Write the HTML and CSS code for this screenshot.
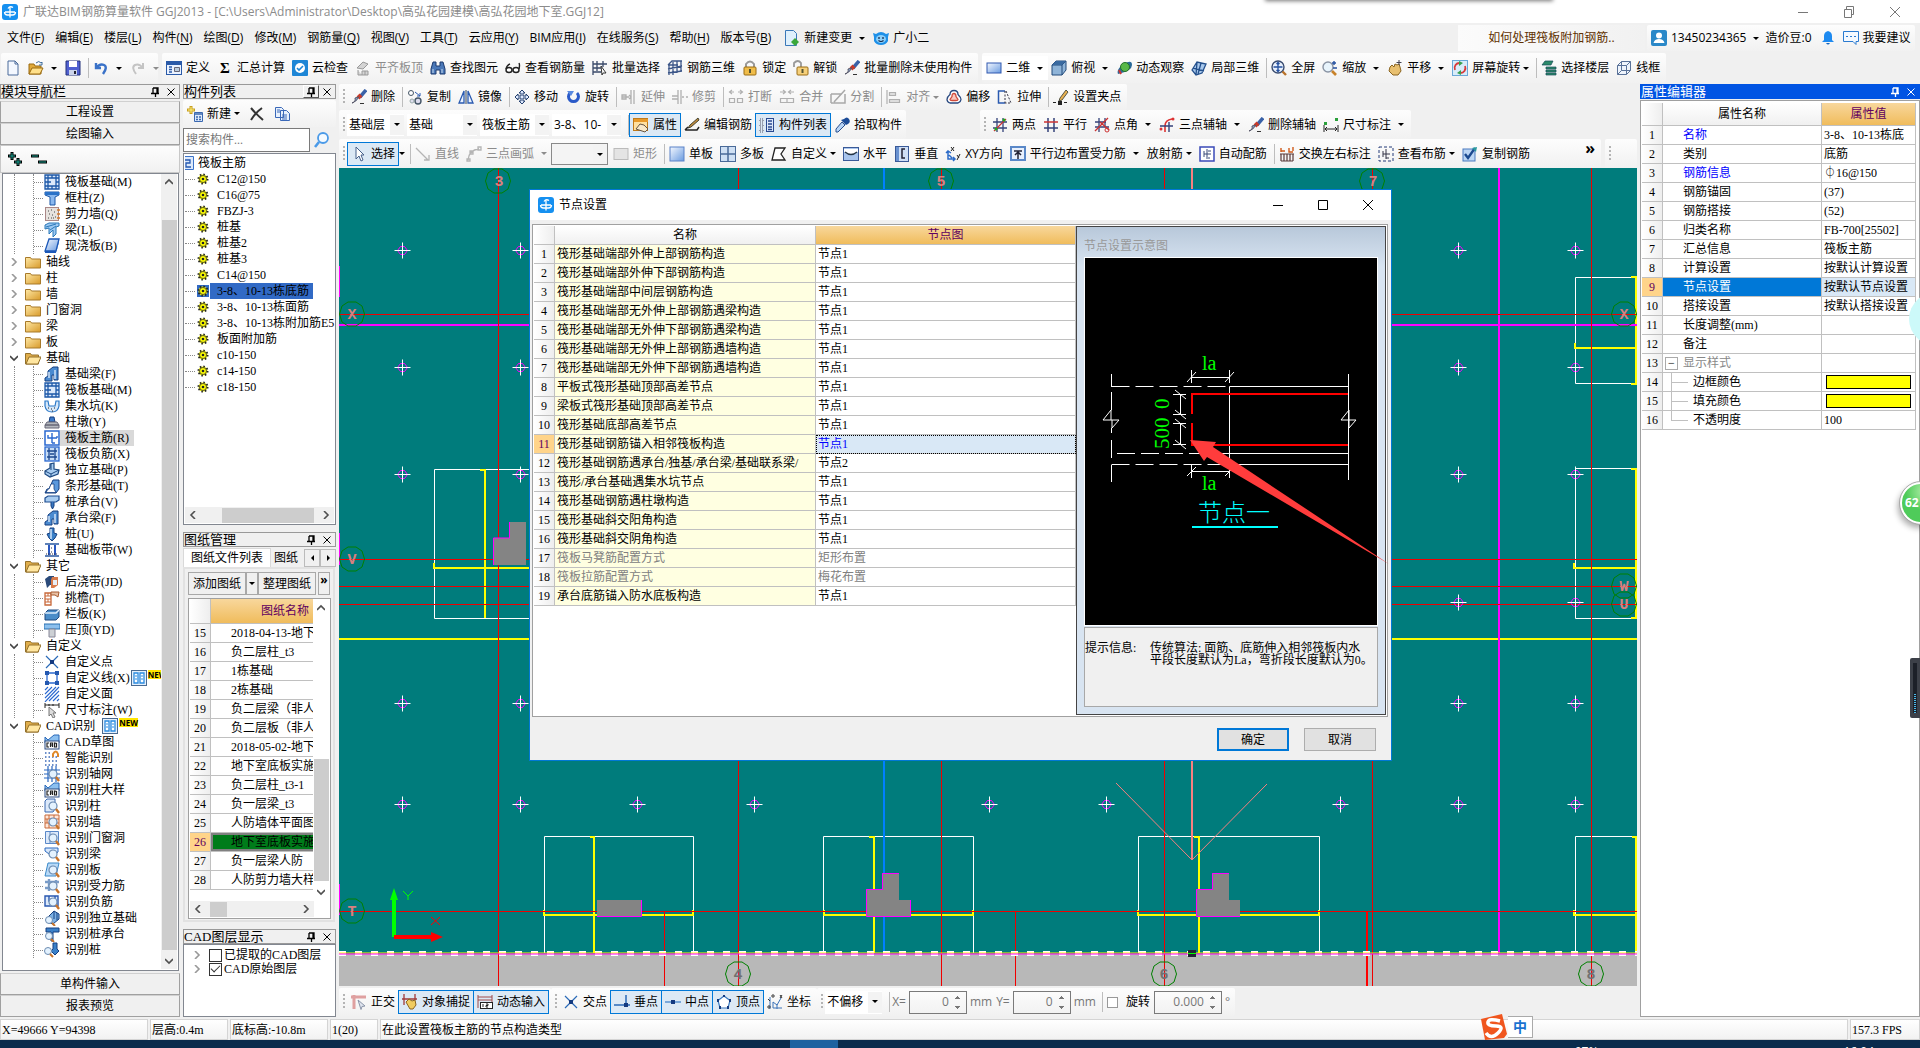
FILE: index.html
```html
<!DOCTYPE html>
<html lang="zh-CN">
<head>
<meta charset="utf-8">
<title>广联达BIM钢筋算量软件 GGJ2013</title>
<link rel="stylesheet" href="styles.css">
</head>
<body>
<svg class="defs" aria-hidden="true">
<defs>
<linearGradient id="gb" x2="1" y2="1"><stop offset="0" stop-color="#f4f8ff"/><stop offset="1" stop-color="#6a9be0"/></linearGradient>
<linearGradient id="gf" x2="1" y2="1"><stop offset="0" stop-color="#ffe9a6"/><stop offset="1" stop-color="#d89a2a"/></linearGradient>
</defs>
<symbol id="logo" viewBox="0 0 16 16"><rect width="16" height="16" rx="3" fill="#1590f0"/><path d="M8 2.500v11M11 3.500q-3-2-5 1M2.500 8q0 3 3 3M13.500 8q0 3-3 3h-5M3 8h10" fill="none" stroke="#fff" stroke-width="1.300"/></symbol>
<symbol id="new" viewBox="0 0 16 16"><path d="M3 1h7l3 3v11H3z" fill="#f4f8ff" stroke="#4a6a9a"/><path d="M10 1v3h3" fill="none" stroke="#4a6a9a"/></symbol>
<symbol id="open" viewBox="0 0 16 16"><path d="M1 4h5l1 2h6v8H1z" fill="#e0a93a" stroke="#9a6a10"/><path d="M1 14l3-6h11l-3 6z" fill="#ffe08a" stroke="#9a6a10"/><path d="M8 3q3-3 5 0l1-1v3h-3" fill="none" stroke="#3b6a9b"/></symbol>
<symbol id="save" viewBox="0 0 16 16"><path d="M1 1h14v14H1z" fill="#5060d0" stroke="#22307a"/><path d="M4 1h8v6H4z" fill="#fff"/><path d="M4 10h8v5H4z" fill="#ccd4ea"/><path d="M9 11h2v3H9z" fill="#223"/></symbol>
<symbol id="undo" viewBox="0 0 16 16"><path d="M3 3v5h5M3 8q4-5 8-3t-1 9" fill="none" stroke="#3a72c8" stroke-width="2.400"/></symbol>
<symbol id="redo" viewBox="0 0 16 16"><path d="M13 3v5H8M13 8Q9 3 5 5t1 9" fill="none" stroke="#c4c4c4" stroke-width="2"/></symbol>
<symbol id="define" viewBox="0 0 16 16"><rect x=".5" y="1.500" width="15" height="13" fill="#eaf2ff" stroke="#2a5aa8"/><path d="M1 2h14v3H1z" fill="#2a5aa8"/><path d="M3 7h3M3 9.500h3M3 12h3" stroke="#2a5aa8" stroke-width="1.500"/><path d="M8.500 7.500h5v4h-5z" fill="#bcd" stroke="#667"/></symbol>
<symbol id="cloud" viewBox="0 0 16 16"><rect width="16" height="16" rx="1" fill="#1e86d6"/><circle cx="8" cy="8" r="5" fill="#fff"/><path d="M5 8l2 2 4-4" fill="none" stroke="#1e86d6" stroke-width="1.600"/></symbol>
<symbol id="top0" viewBox="0 0 16 16"><path d="M2 8l6-6 5 2-5 5zM3 10v5h10v-4H7v4M10 11v4" fill="#d4d4d4" stroke="#999"/></symbol>
<symbol id="bino" viewBox="0 0 16 16"><path d="M3 2h3v4h4V2h3l2 7v5h-5v-4H6v4H1V9z" fill="#4a78b8" stroke="#1c3a6e"/><path d="M3 9v4M12 9v4" stroke="#cde"/></symbol>
<symbol id="glass" viewBox="0 0 16 16"><g fill="#fff" stroke="#222" stroke-width="1.400"><ellipse cx="4" cy="10" rx="3" ry="2.500"/><ellipse cx="11" cy="10" rx="3" ry="2.500"/><path d="M1 9q1-4 4-5M14 9q1-4 0-6" fill="none"/></g></symbol>
<symbol id="batch" viewBox="0 0 16 16"><path d="M1 1v14M5 1v10M1 4h14M1 8h8M1 12h8M11 1v6" fill="none" stroke="#3a4a6a" stroke-width="1.300"/><path d="M9 6l5 7h-3l-1 2z" fill="#fff" stroke="#333"/></symbol>
<symbol id="g3d" viewBox="0 0 16 16"><path d="M1 5l4-4h10M1 9l14-3M1 13l14-2M2 5v10M6 2v13M10 1v12M14 1v11M1 5h10" fill="none" stroke="#3c5688" stroke-width="1.300"/></symbol>
<symbol id="lock" viewBox="0 0 16 16"><path d="M4 8V4q4-5 8 0v4" fill="none" stroke="#999" stroke-width="2"/><rect x="2" y="7" width="12" height="8" rx="1" fill="#f0bd4a" stroke="#9a6d14"/><path d="M8 9v4" stroke="#553" stroke-width="2"/></symbol>
<symbol id="unlock" viewBox="0 0 16 16"><path d="M1 7V3q4-4 7 0v5" fill="none" stroke="#999" stroke-width="1.800"/><rect x="4" y="7" width="11" height="8" rx="1" fill="#f6d07a" stroke="#9a6d14"/><path d="M9.500 9v4" stroke="#553" stroke-width="2"/></symbol>
<symbol id="brush" viewBox="0 0 16 16"><path d="M15 1L9 8" stroke="#3a62a8" stroke-width="3.500"/><path d="M10 6L7 9" stroke="#c83a2a" stroke-width="4"/><path d="M8 8q-3 5-7 6 4-1 3-5z" fill="#8aa8d0" stroke="#556"/><path d="M9 14.500h4" stroke="#333"/></symbol>
<symbol id="r2d" viewBox="0 0 16 16"><rect x="1" y="3" width="14" height="10" fill="url(#gb)" stroke="#3058b0"/></symbol>
<symbol id="cube" viewBox="0 0 16 16"><path d="M1 5l4-4h10v9l-4 5H1z" fill="#8fb4d8" stroke="#234a7a"/><path d="M1 5h10v10M11 5l4-4" fill="none" stroke="#234a7a"/><path d="M1 5l4-4h10l-4 4z" fill="#3a6aa0"/></symbol>
<symbol id="orbit" viewBox="0 0 16 16"><path d="M2 14Q0 9 8 4t8 1q0 6-14 9z" fill="#2a6a9a"/><circle cx="9" cy="7" r="4.500" fill="#58b848" stroke="#24702a"/><path d="M3 10l2 4" stroke="#c33" stroke-width="2"/></symbol>
<symbol id="p3d" viewBox="0 0 16 16"><path d="M1 10l5-8 9 2-4 9-6 2zM6 2l-1 13M10 3l-3 11M2 8l11 3" fill="#a8c8ec" stroke="#24508c" stroke-width="1.300"/></symbol>
<symbol id="zfit" viewBox="0 0 16 16"><circle cx="7" cy="7" r="6" fill="#e8f0fc" stroke="#3a4c70" stroke-width="1.400"/><path d="M7 2.500v9M2.500 7h9M5.500 4L7 2.500 8.500 4M5.500 10L7 11.500 8.500 10" fill="none" stroke="#2450a0" stroke-width="1.300"/><path d="M11.500 11.500l3.500 3.500" stroke="#b8722a" stroke-width="2.400"/></symbol>
<symbol id="zoom" viewBox="0 0 16 16"><circle cx="6" cy="7" r="5" fill="#e8f4fc" stroke="#8a94a4" stroke-width="1.400"/><path d="M10 11l4 4" stroke="#c8822a" stroke-width="2.600"/><path d="M12 1v4M10 3h4M11 8h4" stroke="#2450a0" stroke-width="1.400"/></symbol>
<symbol id="hand" viewBox="0 0 16 16"><path d="M3 7l2-2 2 2 1-3 2 1 2-1 1 3 1 4-3 4H6L2 11z" fill="#e8c070" stroke="#8a6420"/><path d="M12 0v5M9.500 2.500h5" stroke="#445"/></symbol>
<symbol id="rots" viewBox="0 0 16 16"><rect x=".5" y=".5" width="15" height="15" fill="#d8ecfa" stroke="#6aa8d8"/><path d="M3 10a5 5 0 0 1 5-7M13 6a5 5 0 0 1-5 7" fill="none" stroke="#d83a3a" stroke-width="1.800"/><path d="M7 1l4 2-4 3zM9 10l-4 3 4 2z" fill="#3aa050"/></symbol>
<symbol id="floors" viewBox="0 0 16 16"><path d="M1 5l3-4h8l-2 4zM5 7h10v2H5zM5 10h10v2H5zM5 13h10v2H5z" fill="#2c8a6a" stroke="#184a5a" stroke-width=".7"/></symbol>
<symbol id="wire" viewBox="0 0 16 16"><path d="M1.500 5.500h9v9h-9zM1.500 5.500l4-4h9v9l-4 4M10.500 5.500l4-4M5.500 1.500v9h9M5.500 10.500l-4 4" fill="#eef4fc" stroke="#5a7298"/></symbol>
<symbol id="copy" viewBox="0 0 16 16"><circle cx="4" cy="4" r="2.500" fill="#fff" stroke="#456"/><circle cx="11" cy="12" r="3" fill="#dde" stroke="#456" stroke-width="1.400"/><circle cx="5" cy="12" r="2" fill="#dde" stroke="#9aa"/><path d="M8 3l5 4M13 4v3h-3" fill="none" stroke="#2a5ab0"/></symbol>
<symbol id="mirror" viewBox="0 0 16 16"><path d="M6 2v12H1zM10 2v12h5z" fill="#eaf2ff" stroke="#2a5ab0" stroke-width="1.300"/><path d="M8 1v14" stroke="#345"/></symbol>
<symbol id="move" viewBox="0 0 16 16"><path d="M8 1l3 3H9v3h3V5l3 3-3 3V9H9v3h2l-3 3-3-3h2V9H4v2L1 8l3-3v2h3V4H5z" fill="#dfeaff" stroke="#24406e"/></symbol>
<symbol id="rotate" viewBox="0 0 16 16"><path d="M5 4a5 5 0 1 0 7 0" fill="none" stroke="#2a5ac8" stroke-width="3"/><path d="M2 2h7L6 7z" fill="#5a8ae0"/></symbol>
<symbol id="gext" viewBox="0 0 16 16"><path d="M1 8h7M1 6h4v4H1zM10 1v14M13 1v14M8 6l2 2-2 2" fill="none" stroke="#b0b0b0" stroke-width="1.300"/></symbol>
<symbol id="gtrim" viewBox="0 0 16 16"><path d="M6 1v14M9 1v14M0 7h6M0 10h6M10 8h2M14 8h2" fill="none" stroke="#b0b0b0" stroke-width="1.300"/></symbol>
<symbol id="gbrk" viewBox="0 0 16 16"><path d="M1 3h5M10 3h5M4 1L1.500 3 4 5M12 1l2.500 2L12 5M1.500 9.500h5v4h-5zM9.500 9.500h5v4h-5z" fill="none" stroke="#b0b0b0" stroke-width="1.200"/></symbol>
<symbol id="gmrg" viewBox="0 0 16 16"><path d="M1 3h5M10 3h5M4 1L6.500 3 4 5M12 1L9.500 3 12 5M1.500 9.500h13v4h-13zM8 9v5" fill="none" stroke="#b0b0b0" stroke-width="1.200"/></symbol>
<symbol id="gsplit" viewBox="0 0 16 16"><path d="M1 5h11M1 14h14V5M1 5v9M15 1L4 13" fill="none" stroke="#a8a8a8" stroke-width="1.500"/></symbol>
<symbol id="galign" viewBox="0 0 16 16"><path d="M1 1v14M3.500 3.500h6v3h-6zM3.500 10.500h10v3h-10z" fill="#ddd" stroke="#b0b0b0" stroke-width="1.200"/></symbol>
<symbol id="offset" viewBox="0 0 16 16"><path d="M8 1.500q4 0 4 4 3 3 3 5t-3 3.500H4q-3-1-3-3.500t3-5q0-4 4-4z" fill="#fff" stroke="#2a4a80" stroke-width="1.300"/><path d="M8 4.500q2 0 2 3l2 3q0 1-2 1H6q-2 0-2-1l2-3q0-3 2-3z" fill="#f8c8c0" stroke="#d04a3a" stroke-width="1.300"/></symbol>
<symbol id="stretch" viewBox="0 0 16 16"><path d="M8 2H1.500v12H8" fill="none" stroke="#2a5ab0" stroke-width="1.500"/><path d="M8 2v12M9 2l5 12H8" fill="none" stroke="#334" stroke-dasharray="2 1.500"/></symbol>
<symbol id="pen" viewBox="0 0 16 16"><path d="M13 1l2 2-6 8-3 1 1-3z" fill="#e8b050" stroke="#554"/><path d="M0 13.500h3M11 13.500h3" stroke="#222"/><path d="M5 12h4v4H5z" fill="#222"/></symbol>
<symbol id="prop" viewBox="0 0 16 16"><rect x=".5" y="1.500" width="14" height="12" fill="#ffe0a0" stroke="#c07a1a"/><path d="M1 2h14v3H1z" fill="#e89a2a"/><path d="M3 12l4-5 4 1 4 4-3 3z" fill="#f8e8c8" stroke="#654"/></symbol>
<symbol id="ebar" viewBox="0 0 16 16"><path d="M14 1l1 2-8 7-3 1 2-3z" fill="#c08a3a" stroke="#443"/><path d="M1 13h12l2-3M1 13l3-3" fill="none" stroke="#222" stroke-width="1.500"/></symbol>
<symbol id="clist" viewBox="0 0 16 16"><path d="M1 2h3v3H1zM1 7h3v3H1zM1 12h3v3H1z" fill="none" stroke="#556" stroke-dasharray="1 1"/><rect x="7.500" y="1.500" width="7" height="13" fill="#dde8fa" stroke="#2a4a90"/><path d="M9 4h4M9 7h4M9 10h4M9 12.500h4" stroke="#2a4a90" stroke-width="1.300"/></symbol>
<symbol id="picker" viewBox="0 0 16 16"><path d="M10 2q3-3 5 0t-1 5l-2 1-5-5z" fill="#1c4c98"/><path d="M8 5l3 3-7 7H2v-3z" fill="#b8d4f4" stroke="#2a5090"/></symbol>
<symbol id="twopt" viewBox="0 0 16 16"><path d="M5 1v14M11 1v14M1 5h14M1 11h14" stroke="#34427a" stroke-width="1.300"/><path d="M2 14L14 2" stroke="#c33" stroke-width="1.300"/><circle cx="12" cy="3" r="1.500" fill="#2a2"/><circle cx="4" cy="12" r="1.500" fill="#2a2"/></symbol>
<symbol id="par" viewBox="0 0 16 16"><path d="M5 1v14M11 1v14M1 11h14" stroke="#34427a" stroke-width="1.500"/><path d="M1 5h14" stroke="#c33" stroke-width="1.500"/></symbol>
<symbol id="ptang" viewBox="0 0 16 16"><path d="M5 1v14M1 10h14M11 1v9M1 5h11" stroke="#34427a" stroke-width="1.300"/><path d="M1 14L14 1M6 5l9 8" stroke="#c33" stroke-width="1.400"/><circle cx="13" cy="13" r="2" fill="none" stroke="#c33"/></symbol>
<symbol id="arcax" viewBox="0 0 16 16"><path d="M6 15V9q0-6 7-7" fill="none" stroke="#d33" stroke-width="1.600"/><path d="M1 9h13M10 5v10" stroke="#34427a" stroke-width="1.400"/><circle cx="14" cy="2" r="1.500" fill="#d33"/><circle cx="2" cy="12" r="1.500" fill="#d33"/></symbol>
<symbol id="dim" viewBox="0 0 16 16"><path d="M1 8v7M15 8v7M2 12h12M4 10l-2 2 2 2M12 10l2 2-2 2" fill="none" stroke="#222"/><path d="M12 1h3v3h-3zM1 5h3v3H1z" fill="#2aa03a"/></symbol>
<symbol id="cursor" viewBox="0 0 16 16"><path d="M5 1v12l3-3 2 5 2-1-2-5h3z" fill="#fff" stroke="#46608a"/></symbol>
<symbol id="gline" viewBox="0 0 16 16"><path d="M1 2l12 12M14 9v5H9" fill="none" stroke="#b4b4b4" stroke-width="1.300"/></symbol>
<symbol id="garc" viewBox="0 0 16 16"><path d="M2 14Q3 4 13 3M1 13h3v2H1zM12 1h3v3h-3zM4 5h3v3H4z" fill="none" stroke="#b4b4b4" stroke-width="1.300"/></symbol>
<symbol id="grect" viewBox="0 0 16 16"><rect x="1" y="2.500" width="14" height="11" fill="#e4e4e4" stroke="#bbb"/></symbol>
<symbol id="slab1" viewBox="0 0 16 16"><rect x="1" y="1" width="14" height="14" fill="url(#gb)" stroke="#5a82c8"/></symbol>
<symbol id="slab4" viewBox="0 0 16 16"><rect x=".5" y=".5" width="15" height="15" fill="#cfe0f4" stroke="#4a6a98"/><path d="M8 1v14M1 8h14" stroke="#4a6a98" stroke-width="1.500"/></symbol>
<symbol id="poly" viewBox="0 0 16 16"><path d="M4 2h10l-4 6 4 6H1z" fill="#fff" stroke="#222" stroke-width="1.300"/></symbol>
<symbol id="horiz" viewBox="0 0 16 16"><rect x=".5" y="1.500" width="15" height="13" fill="#a8c4ec" stroke="#3a5a98"/><path d="M1 3h14v3q-7 5-14 0z" fill="#fff"/><path d="M2 6q6 5 12 0" fill="none" stroke="#234" stroke-width="1.500"/></symbol>
<symbol id="vert" viewBox="0 0 16 16"><rect x="1.500" y=".5" width="13" height="15" fill="#cfdff6" stroke="#3a5a98"/><path d="M11 3H8v9h3" fill="none" stroke="#223" stroke-width="1.500"/><path d="M2 1h3v14H2z" fill="#6a92d0"/></symbol>
<symbol id="xy" viewBox="0 0 16 16"><path d="M6 1l3 4M9 1L6 5M12 9l2 3M15 8l-3 6" stroke="#222"/><path d="M3 5v8h7M1 7l2-2 3 2M8 11l2 2-2 2M4 9l3 3" fill="none" stroke="#2a6ac8" stroke-width="1.500"/></symbol>
<symbol id="pedge" viewBox="0 0 16 16"><rect x="1" y="1" width="14" height="13" fill="#e8f0fc" stroke="#5a88c8" stroke-width="2"/><path d="M4 5h8M8 13V7M5 9l3-3 3 3" fill="none" stroke="#223" stroke-width="1.500"/></symbol>
<symbol id="abar" viewBox="0 0 16 16"><rect x="1" y="1" width="14" height="14" fill="#fff" stroke="#3a4ab8" stroke-width="1.500"/><path d="M8 3v10M5 5v6M5 8h7M9 5h3M9 12h2" stroke="#3a4a78"/></symbol>
<symbol id="swap" viewBox="0 0 16 16"><path d="M1 8h14M2 8v7M5 8v7M8 8v7M11 8v7M14 8v7M2 15h12" stroke="#5a3a3a" stroke-width="1.200"/><path d="M2 5h4M2 2v4M10 2v4h4M14 1v4" fill="none" stroke="#d05a1a" stroke-width="1.400"/></symbol>
<symbol id="vbar" viewBox="0 0 16 16"><rect x="1" y="1" width="14" height="14" fill="none" stroke="#223a78" stroke-dasharray="3 2"/><path d="M8 3v10M5 5v6M5 8h7M8 12h3" stroke="#334"/></symbol>
<symbol id="cbar" viewBox="0 0 16 16"><rect x="1" y="3" width="12" height="12" fill="#bcd6f4" stroke="#4a7ac0"/><path d="M3 8l3 4 7-10" fill="none" stroke="#1c4a90" stroke-width="2.400"/><path d="M10 2l5-1-1 5z" fill="#2a9aa0"/></symbol>
<symbol id="ortho" viewBox="0 0 16 16"><path d="M3 1v14M0 3h15" stroke="#dfa0a0" stroke-width="3"/><path d="M7 6l7 6-3 .5-1 3z" fill="#dfe4ee" stroke="#8a94a8"/></symbol>
<symbol id="osnap" viewBox="0 0 16 16"><path d="M2 0v11M13 0v6M0 5h15" stroke="#a03a3a" stroke-width="1.300"/><path d="M4 8l3-3 3 2 3-1 1 5-3 4H8z" fill="#f0cc60" stroke="#8a6420"/></symbol>
<symbol id="dyn" viewBox="0 0 16 16"><path d="M1 1v13M15 1v8M1 3h14M1 6h14" stroke="#a04a4a"/><rect x="3.500" y="8.500" width="12" height="6" fill="#fff" stroke="#222"/><path d="M6 10v3M9 10h2v1.500H9V13h2" fill="none" stroke="#222"/></symbol>
<symbol id="xpt" viewBox="0 0 16 16"><path d="M2 2l12 12M14 2L2 14" stroke="#2a6ab8" stroke-width="1.200"/><path d="M6 6h4v4H6z" fill="#143a80"/></symbol>
<symbol id="perp" viewBox="0 0 16 16"><path d="M0 11h16M12 1v10" stroke="#2a6ab8" stroke-width="1.500"/><path d="M10 9h4v4h-4z" fill="#143a80"/></symbol>
<symbol id="mid" viewBox="0 0 16 16"><path d="M0 8h16" stroke="#5a92d0" stroke-width="1.500"/><path d="M6 6h4v4H6z" fill="#143a80"/></symbol>
<symbol id="vtx" viewBox="0 0 16 16"><path d="M8 2l6 4.500-2 7.500H4L2 6.500z" fill="#fff" stroke="#3a7ac0" stroke-width="1.200"/><path d="M7 1h2v2H7zM1 5h2v3H1zM13 5h2v3h-2zM3 12h2v3H3zM11 12h2v3h-2z" fill="#143a80"/></symbol>
<symbol id="coord" viewBox="0 0 16 16"><path d="M3 3v12M6 14V8l4 3 4-7M10 10v5M6 14h9" fill="none" stroke="#3a72b8"/><circle cx="6" cy="2" r="1.200" fill="none" stroke="#333"/><circle cx="2" cy="13" r="1.200" fill="none" stroke="#333"/><path d="M1 5l2 2M13 1l2 3M15 1l-2 3" stroke="#333"/></symbol>
<symbol id="fold" viewBox="0 0 16 16"><path d="M.5 3.500h5l1 1.500h9v9H.5z" fill="url(#gf)" stroke="#a87a2a"/></symbol>
<symbol id="foldo" viewBox="0 0 16 16"><path d="M.5 3.500h5l1 1.500h7v9H.5z" fill="#e0ae4c" stroke="#94712a"/><path d="M1 14l3-7h12l-3 7z" fill="#ffe6a0" stroke="#94712a"/></symbol>
<symbol id="raft" viewBox="0 0 16 16"><path d="M1 1h14v14H1zM4 4h8v8H4zM1 4h3M1 8h3M12 4h3M12 8h3M4 1v3M8 1v3M12 1v3M4 12v3M8 12v3M12 12v3M1 12h3M12 12h3M4 8h3" fill="#dce9fa" stroke="#1c58a8" stroke-width="1.300"/></symbol>
<symbol id="col" viewBox="0 0 16 16"><path d="M1 2h14v3l-4 2v8H6V7L1 5z" fill="#8ab8ee" stroke="#1c58a8"/><path d="M1 2h14v3H1z" fill="#2a72c8"/></symbol>
<symbol id="wall" viewBox="0 0 16 16"><rect x="1.500" y="1.500" width="13" height="13" fill="#e6e2de" stroke="#a88"/><path d="M4 5h1M7 4h1M10 6h1M5 8h1M8 9h1M11 11h1M4 12h1M7 12h1M9 12h1" stroke="#444"/><path d="M13 4h3M13 8h3M13 12h3" stroke="#d47a2a" stroke-width="1.500"/></symbol>
<symbol id="beam" viewBox="0 0 16 16"><path d="M1 3l4-2h10v3l-3 1v7l-3 3V8L5 12V6L1 7z" fill="#9cc8f2" stroke="#2a78b8"/><path d="M2 5l10-3M6 8l6-4" stroke="#2a78b8"/></symbol>
<symbol id="slab" viewBox="0 0 16 16"><path d="M5 1h10l-3 12H1z" fill="url(#gb)" stroke="#1c58b8" stroke-width="1.300"/><path d="M1 13h11v2H1zM15 1v3l-3 11" fill="#1c58b8"/></symbol>
<symbol id="fbeam" viewBox="0 0 16 16"><path d="M1 15v-3l3-2V5l5-4h5v13h-4V9H8v6z" fill="#4a8ad0" stroke="#153f80"/><path d="M5 6v6M11 4v9" stroke="#cfe2f8" stroke-width="1.500"/></symbol>
<symbol id="pit" viewBox="0 0 16 16"><path d="M1 3h3l1 5h6l1-5h3v5q-1 6-7 6T1 8z" fill="#d6e8fa" stroke="#2a78c8" stroke-width="1.200"/><path d="M4 10h1M7 11h1M10 10h1M8 13h1" stroke="#222"/></symbol>
<symbol id="pier" viewBox="0 0 16 16"><path d="M5 8l1-5h4l1 5z" fill="#3a78c8" stroke="#153f80"/><path d="M3 8h10l2 3H1zM1 11h14v3H1z" fill="#b4b8be" stroke="#667"/></symbol>
<symbol id="rmain" viewBox="0 0 16 16"><rect x="1" y="1" width="14" height="14" fill="#fff" stroke="#2a68d0" stroke-width="1.500"/><path d="M8 3v10M4 5v3h9M8 13h3M13 6v2" fill="none" stroke="#2a68d0" stroke-width="1.400"/></symbol>
<symbol id="rneg" viewBox="0 0 16 16"><rect x="1" y="1" width="14" height="14" fill="#c6dcf6" stroke="#2a68d0" stroke-width="1.300"/><path d="M5 2v12M11 2v12M3 5h10M3 11h10M6 8h4" stroke="#1c4890" stroke-width="1.300"/></symbol>
<symbol id="iso" viewBox="0 0 16 16"><path d="M1 9l5-3V2l4-1v6l5 1-1 4-8 3-5-3z" fill="#a8ccf0" stroke="#1c4880" stroke-width="1.200"/><path d="M1 9l6 3 8-4M7 12v3M7 2v6" fill="none" stroke="#1c4880"/></symbol>
<symbol id="strip" viewBox="0 0 16 16"><path d="M1 15l2-4h2l4-9h6v9l-3 4z" fill="#5a98dc" stroke="#153f80"/><path d="M2 14.500L4 11h1l2-5h3v5l2 3.500z" fill="#fff" stroke="#153f80" stroke-width=".8"/></symbol>
<symbol id="pcap" viewBox="0 0 16 16"><path d="M1 4l3-2h11v4l-3 2H1z" fill="#a8ccf0" stroke="#1c4c90" stroke-width="1.200"/><path d="M7 8v4l1.500 3 1.500-3V8" fill="#3a78c0" stroke="#153f80"/></symbol>
<symbol id="pile" viewBox="0 0 16 16"><path d="M6 2h4v5l3 1-2 4-3 3-3-3-2-4 3-1z" fill="#3a80c8" stroke="#153f80"/><path d="M7 3v10" stroke="#d0e4fa" stroke-width="1.500"/></symbol>
<symbol id="band" viewBox="0 0 16 16"><path d="M1 2h14M1 14h14" stroke="#2a58a0" stroke-width="1.500"/><path d="M5 3v10M11 3v10" stroke="#2a58c0" stroke-width="2"/><path d="M7 6h1M7 10h2M2 12h12" stroke="#334" stroke-dasharray="1 1"/></symbol>
<symbol id="pour" viewBox="0 0 16 16"><path d="M1 5l4-3h5v9H6L3 14z" fill="#2a4a7a"/><path d="M8 3h6v8l-4 3H7V6z" fill="#d87a4a"/><path d="M9 6h4v5H9z" fill="#e8eef6"/></symbol>
<symbol id="eave" viewBox="0 0 16 16"><path d="M1 3h6v12H1z" fill="#fff" stroke="#c8683a" stroke-width="1.300"/><path d="M1 6h6M1 9h6M1 12h6M4 3v3M4 9v3" stroke="#c8683a"/><path d="M7 2h8l-1 5-3-2H7z" fill="#e8c0a4" stroke="#a85a30"/></symbol>
<symbol id="rail" viewBox="0 0 16 16"><path d="M1 7l3-3h11v7l-3 3H1z" fill="#4a8cc8" stroke="#1c4880"/><path d="M1 7h11l3-3" fill="none" stroke="#dcecfc" stroke-width="1.500"/></symbol>
<symbol id="cap" viewBox="0 0 16 16"><path d="M0 2h16v5H0z" fill="#8cc0ee" stroke="#2a70b0"/><path d="M5 7h6v8H5z" fill="#ccd0d4" stroke="#889"/></symbol>
<symbol id="line4" viewBox="0 0 16 16"><path d="M3 3h10v10H3z" fill="#fff" stroke="#2a68d0" stroke-width="1.300"/><path d="M1 1h4v4H1zM11 1h4v4h-4zM1 11h4v4H1zM11 11h4v4h-4z" fill="#2458b0"/></symbol>
<symbol id="hatch" viewBox="0 0 16 16"><path d="M1 4l3-3M1 8l7-7M1 12l11-11M1 16L15 1M5 15L15 5M9 15l6-6M13 15l2-2" stroke="#2a68d0" stroke-width="1.100"/></symbol>
<symbol id="dimw" viewBox="0 0 16 16"><path d="M1 1v5M15 1v5M1 3h14M5 2v2M9 2v2" stroke="#222"/><path d="M5 5v9l2-2 2 4 2-1-2-4h3z" fill="#ddd" stroke="#777"/></symbol>
<symbol id="cad" viewBox="0 0 16 16"><path d="M1 3l3 3 6-5h5v8H1z" fill="#8cc0f0" stroke="#2a68b8"/><rect x="1" y="7" width="14" height="8" fill="#fff" stroke="#2a4a80"/><path d="M5 9H3v4h2M6.500 13V9h2v4M6.500 11h2M10.500 9v4h2V9.500z" fill="none" stroke="#222" stroke-width="1.200"/></symbol>
<symbol id="smart" viewBox="0 0 16 16"><path d="M1 3h6M1 7h14M1 11h14M1 15h14" stroke="#3a68b8" stroke-width="1.500" stroke-dasharray="1.500 2"/><path d="M9 7V4q3-5 5 0v3" fill="none" stroke="#e08a2a" stroke-width="2"/></symbol>
<symbol id="mag" viewBox="0 0 16 16"><circle cx="9" cy="8" r="4" fill="#e4f2fe" stroke="#6a8ab0" stroke-width="1.200"/><path d="M12 11l3 4" stroke="#c8742a" stroke-width="2.400"/></symbol>
<symbol id="iax" viewBox="0 0 16 16"><path d="M4 0v16M8 0v16M12 0v16M0 4h16M0 8h16M0 12h16" stroke="#2a68c0" stroke-width="1.200"/><use href="#mag"/></symbol>
<symbol id="icol" viewBox="0 0 16 16"><path d="M1 3l2-2h8v10l-2 3H1z" fill="#dce9fa" stroke="#3a68b0"/><use href="#mag"/></symbol>
<symbol id="iwall" viewBox="0 0 16 16"><path d="M1 1h14v13H1zM1 5h14M1 9h14M5 1v4M10 1v4M3 5v4M5 9v5" fill="#ffe6d8" stroke="#c86a3a"/><use href="#mag"/></symbol>
<symbol id="idoor" viewBox="0 0 16 16"><path d="M1.500 1.500h13v12h-13zM6 2v11" fill="#dce9fa" stroke="#5a88c8"/><use href="#mag"/></symbol>
<symbol id="ibeam" viewBox="0 0 16 16"><path d="M1 2h13v4l-3 2H5L1 5z" fill="#d8e8fb" stroke="#2a68c0"/><use href="#mag"/></symbol>
<symbol id="islab" viewBox="0 0 16 16"><path d="M4 1h11l-3 13H1z" fill="#b8daf8" stroke="#3a88c8"/><use href="#mag"/></symbol>
<symbol id="ibar" viewBox="0 0 16 16"><path d="M1 4h14M5 1v12M12 2v5M1 10h6" stroke="#7a9cc8" stroke-width="2.400"/><use href="#mag"/></symbol>
<symbol id="ineg" viewBox="0 0 16 16"><path d="M1 2h13v10H1zM5 2v5h6V2" fill="#dce9fa" stroke="#2a58b0" stroke-width="1.400"/><use href="#mag"/></symbol>
<symbol id="ibar2" viewBox="0 0 16 16"><path d="M4 7l6-6 5 3v5l-6 5-6-2z" fill="#7ab0e4" stroke="#153f80"/><path d="M10 1v8M13 3v7" stroke="#153f80"/><circle cx="5" cy="10" r="3.500" fill="#e4f2fe" stroke="#6a8ab0"/><path d="M8 13l3 3" stroke="#c8742a" stroke-width="2"/></symbol>
<symbol id="ipc" viewBox="0 0 16 16"><path d="M2 2h13v4H9v9H7V6H2z" fill="#3a80c8" stroke="#153f80"/><circle cx="5" cy="10" r="3.500" fill="#e4f2fe" stroke="#6a8ab0"/><path d="M7 13l3 3" stroke="#c8742a" stroke-width="2"/></symbol>
<symbol id="ipl" viewBox="0 0 16 16"><path d="M9 1h4v6l2 2-4 4-4-4 2-2z" fill="#3a80c8" stroke="#153f80"/><circle cx="4" cy="9" r="3.500" fill="#e4f2fe" stroke="#6a8ab0"/><path d="M6 12l3 3" stroke="#c8742a" stroke-width="2"/></symbol>
<symbol id="vid" viewBox="0 0 16 16"><rect x=".5" y=".5" width="15" height="15" fill="#e4f0fc" stroke="#4a6a90"/><path d="M3 3h4v10H3zM9 3h4v10H9z" fill="#fff" stroke="#2a8ae0" stroke-width="1.300"/><path d="M4 6h2M4 9h2M10 6h2M10 9h2" stroke="#2a8ae0"/></symbol>
<symbol id="gear" viewBox="0 0 12 12"><circle cx="6" cy="6" r="4.500" fill="#ff0" stroke="#222" stroke-width="2" stroke-dasharray="1.500 2"/><circle cx="6" cy="6" r="3.500" fill="#ff0" stroke="#333" stroke-width=".8"/><circle cx="6" cy="6" r="1.300" fill="#222"/></symbol>
<symbol id="newc" viewBox="0 0 16 16"><path d="M4 0v8M0 4h8" stroke="#c8a020" stroke-width="3"/><path d="M4 1v6M1 4h6" stroke="#fff080" stroke-width="1"/><path d="M7.500 6.500h8v9h-8z" fill="#dde9fb" stroke="#3a68b0"/><path d="M8 8h7M9 11h2M9 13.500h2M12 11h2M12 13.500h2" stroke="#3a68b0" stroke-width="1.300"/></symbol>
<symbol id="del" viewBox="0 0 16 16"><path d="M2 2q5 6 12 12M13 2Q7 6 2 14" fill="none" stroke="#333" stroke-width="2"/></symbol>
<symbol id="docs" viewBox="0 0 16 16"><path d="M1.500 1.500h6l2 2v8h-8zM6.500 4.500h6l3 3v7h-9z" fill="#e8f1fd" stroke="#3a68b8"/><path d="M8 9h5M8 11h5M8 13h5M3 4h3M3 6h3" stroke="#3a68b8"/></symbol>
<symbol id="find" viewBox="0 0 16 16"><circle cx="9" cy="6" r="5" fill="#f4faff" stroke="#4a9ae8" stroke-width="1.800"/><path d="M5 10l-4 5" stroke="#4a9ae8" stroke-width="2.600"/></symbol>
<symbol id="list0" viewBox="0 0 10 16"><path d="M0 1.500h8.500v13H0" fill="#dce9fb" stroke="#3a72c8"/><path d="M0 5h5v3H1v4h5" fill="none" stroke="#2458b0" stroke-width="1.300"/></symbol>
<symbol id="user" viewBox="0 0 16 16"><rect width="16" height="16" rx="2" fill="#2a88c8"/><circle cx="8" cy="5.500" r="3" fill="#fff"/><path d="M2.500 13q1-4 5.500-4t5.500 4z" fill="#fff"/></symbol>
<symbol id="bell" viewBox="0 0 16 16"><path d="M8 1q4 1 4 5v4l2 2H2l2-2V6q0-4 4-5z" fill="#1e8af0"/><path d="M6 13h4q-2 3-4 0z" fill="#1266c0"/></symbol>
<symbol id="chat" viewBox="0 0 16 16"><path d="M.5 1.500h15v10H13v3l-3-3H.5z" fill="#f4f9ff" stroke="#2a7ad0"/><path d="M3 6.500h2M7 6.500h2M11 6.500h2" stroke="#2a7ad0"/></symbol>
<symbol id="chg" viewBox="0 0 16 16"><path d="M1.500.5h8l3 3v12h-11z" fill="#dff0fc" stroke="#3a78b8"/><path d="M11 8l4 4-4 4-4-4z" fill="#3aa83a"/></symbol>
<symbol id="bot" viewBox="0 0 16 16"><path d="M0 3l3 1q5-4 10 0l3-1-1 4v4q-2 4-7 4t-7-4V7z" fill="#1e90e8"/><ellipse cx="8" cy="9" rx="5" ry="4" fill="#8cd0fa"/><path d="M6 7v2M10 7v2M5.500 10.500q2.500 2 5 0" fill="none" stroke="#124" stroke-width="1.200"/></symbol>
<symbol id="pin" viewBox="0 0 10 10"><path d="M3 1h5v5M3 1v5M1 6.500h8M5.500 7v3M7 1v5" fill="none" stroke="currentColor" stroke-width="1.300"/></symbol>
<symbol id="cls" viewBox="0 0 10 10"><path d="M1.500 1.500l7 7M8.500 1.500l-7 7" fill="none" stroke="currentColor"/></symbol>
<symbol id="cr" viewBox="0 0 8 8"><path d="M2 0l4 4-4 4" fill="none" stroke="currentColor" stroke-width="1.600"/></symbol>
<symbol id="cd" viewBox="0 0 8 8"><path d="M0 2l4 4 4-4" fill="none" stroke="currentColor" stroke-width="1.600"/></symbol>
<symbol id="cl" viewBox="0 0 8 8"><path d="M6 0L2 4l4 4" fill="none" stroke="currentColor" stroke-width="1.600"/></symbol>
<symbol id="cu" viewBox="0 0 8 8"><path d="M0 6l4-4 4 4" fill="none" stroke="currentColor" stroke-width="1.600"/></symbol>
<symbol id="pp" viewBox="0 0 16 16"><path d="M5 1v8M1 5h8M11 7v8M7 11h8" stroke="#000" stroke-width="3"/><path d="M5 2v6M2 5h6M11 8v6M8 11h6" stroke="#18a090" stroke-width="1"/></symbol>
<symbol id="mm" viewBox="0 0 16 16"><path d="M0 5h8M7 11h9" stroke="#000" stroke-width="3"/><path d="M1 5h6M8 11h7" stroke="#18a090" stroke-width="1"/></symbol>
</svg>

<header class="titlebar">
  <svg class="ic"><use href="#logo"/></svg>
  <h1>广联达BIM钢筋算量软件 GGJ2013 - [C:\Users\Administrator\Desktop\高弘花园建模\高弘花园地下室.GGJ12]</h1>
  <div class="winbtns"><button aria-label="最小化"><svg viewBox="0 0 12 12"><path d="M1 6.500h10"/></svg></button><button aria-label="还原"><svg viewBox="0 0 12 12"><path d="M1.500 3.500h7v8h-7zM3.500 3V.5h7v8H9"/></svg></button><button aria-label="关闭"><svg viewBox="0 0 12 12"><path d="M1 1l10 10M11 1L1 11"/></svg></button></div>
</header>

<nav class="menubar">
  <button>文件(<u>F</u>)</button><button>编辑(<u>E</u>)</button><button>楼层(<u>L</u>)</button><button>构件(<u>N</u>)</button><button>绘图(<u>D</u>)</button><button>修改(<u>M</u>)</button><button>钢筋量(<u>Q</u>)</button><button>视图(<u>V</u>)</button><button>工具(<u>T</u>)</button><button>云应用(<u>Y</u>)</button><button>BIM应用(<u>I</u>)</button><button>在线服务(<u>S</u>)</button><button>帮助(<u>H</u>)</button><button>版本号(<u>B</u>)</button>
  <div class="grp flat"><button class="tb"><svg class="ic"><use href="#chg"/></svg>新建变更<i class="ar"></i></button><button class="tb"><svg class="ic"><use href="#bot"/></svg>广小二</button></div>
  <a class="tip" href="#">如何处理筏板附加钢筋..</a>
  <div class="grp acct"><button class="tb"><svg class="ic"><use href="#user"/></svg>13450234365<i class="ar"></i></button><span>造价豆:0</span><button class="tb" aria-label="消息"><svg class="ic"><use href="#bell"/></svg></button><button class="tb"><svg class="ic"><use href="#chat"/></svg>我要建议</button></div>
</nav>

<div class="bar top">
  <div class="grp file"><button class="tb" aria-label="新建"><svg class="ic"><use href="#new"/></svg></button><button class="tb" aria-label="打开"><svg class="ic"><use href="#open"/></svg><i class="ar"></i></button><button class="tb" aria-label="保存"><svg class="ic"><use href="#save"/></svg></button><i class="sep"></i><button class="tb" aria-label="撤销"><svg class="ic"><use href="#undo"/></svg><i class="ar"></i></button><button class="tb off" aria-label="重做"><svg class="ic"><use href="#redo"/></svg><i class="ar"></i></button></div>
  <div class="grp"><button class="tb"><svg class="ic"><use href="#define"/></svg>定义</button><button class="tb"><b class="sum">Σ</b>汇总计算</button><button class="tb"><svg class="ic"><use href="#cloud"/></svg>云检查</button><button class="tb off"><svg class="ic"><use href="#top0"/></svg>平齐板顶</button><button class="tb"><svg class="ic"><use href="#bino"/></svg>查找图元</button><button class="tb"><svg class="ic"><use href="#glass"/></svg>查看钢筋量</button><button class="tb"><svg class="ic"><use href="#batch"/></svg>批量选择</button><button class="tb"><svg class="ic"><use href="#g3d"/></svg>钢筋三维</button><button class="tb"><svg class="ic"><use href="#lock"/></svg>锁定</button><button class="tb"><svg class="ic"><use href="#unlock"/></svg>解锁</button><button class="tb"><svg class="ic"><use href="#brush"/></svg>批量删除未使用构件</button></div>
  <div class="grp"><button class="tb white"><svg class="ic"><use href="#r2d"/></svg>二维<i class="ar"></i></button><button class="tb"><svg class="ic"><use href="#cube"/></svg>俯视<i class="ar"></i></button><button class="tb"><svg class="ic"><use href="#orbit"/></svg>动态观察</button><button class="tb"><svg class="ic"><use href="#p3d"/></svg>局部三维</button><i class="sep"></i><button class="tb"><svg class="ic"><use href="#zfit"/></svg>全屏</button><button class="tb"><svg class="ic"><use href="#zoom"/></svg>缩放<i class="ar"></i></button><button class="tb"><svg class="ic"><use href="#hand"/></svg>平移<i class="ar"></i></button><button class="tb"><svg class="ic"><use href="#rots"/></svg>屏幕旋转<i class="ar t"></i></button><i class="sep"></i><button class="tb"><svg class="ic"><use href="#floors"/></svg>选择楼层</button><button class="tb"><svg class="ic"><use href="#wire"/></svg>线框</button></div>
</div>

<div class="work">
<aside class="nav">
  <div class="cap"><h2>模块导航栏</h2><button aria-label="固定"><svg><use href="#pin"/></svg></button><button aria-label="关闭"><svg><use href="#cls"/></svg></button></div>
  <button class="big">工程设置</button><button class="big">绘图输入</button>
  <div class="exp"><button aria-label="全部展开"><svg class="ic"><use href="#pp"/></svg></button><button aria-label="全部折叠"><svg class="ic"><use href="#mm"/></svg></button></div>
  <div class="treebox">
   <ul class="tree">
    <li><div class="sub"><ul class="kids">
     <li><svg class="ic"><use href="#raft"/></svg>筏板基础(M)</li><li><svg class="ic"><use href="#col"/></svg>框柱(Z)</li><li><svg class="ic"><use href="#wall"/></svg>剪力墙(Q)</li><li><svg class="ic"><use href="#beam"/></svg>梁(L)</li><li><svg class="ic"><use href="#slab"/></svg>现浇板(B)</li></ul></div></li>
    <li><div class="node"><svg class="ch"><use href="#cr"/></svg><svg class="ic"><use href="#fold"/></svg>轴线</div></li>
    <li><div class="node"><svg class="ch"><use href="#cr"/></svg><svg class="ic"><use href="#fold"/></svg>柱</div></li>
    <li><div class="node"><svg class="ch"><use href="#cr"/></svg><svg class="ic"><use href="#fold"/></svg>墙</div></li>
    <li><div class="node"><svg class="ch"><use href="#cr"/></svg><svg class="ic"><use href="#fold"/></svg>门窗洞</div></li>
    <li><div class="node"><svg class="ch"><use href="#cr"/></svg><svg class="ic"><use href="#fold"/></svg>梁</div></li>
    <li><div class="node"><svg class="ch"><use href="#cr"/></svg><svg class="ic"><use href="#fold"/></svg>板</div></li>
    <li><div class="node"><svg class="ch o"><use href="#cd"/></svg><svg class="ic"><use href="#foldo"/></svg>基础</div><div class="sub"><ul class="kids">
     <li><svg class="ic"><use href="#fbeam"/></svg>基础梁(F)</li><li><svg class="ic"><use href="#raft"/></svg>筏板基础(M)</li><li><svg class="ic"><use href="#pit"/></svg>集水坑(K)</li><li><svg class="ic"><use href="#pier"/></svg>柱墩(Y)</li><li class="cur"><svg class="ic"><use href="#rmain"/></svg><span>筏板主筋(R)</span></li><li><svg class="ic"><use href="#rneg"/></svg>筏板负筋(X)</li><li><svg class="ic"><use href="#iso"/></svg>独立基础(P)</li><li><svg class="ic"><use href="#strip"/></svg>条形基础(T)</li><li><svg class="ic"><use href="#pcap"/></svg>桩承台(V)</li><li><svg class="ic"><use href="#fbeam"/></svg>承台梁(F)</li><li><svg class="ic"><use href="#pile"/></svg>桩(U)</li><li><svg class="ic"><use href="#band"/></svg>基础板带(W)</li></ul></div></li>
    <li><div class="node"><svg class="ch o"><use href="#cd"/></svg><svg class="ic"><use href="#foldo"/></svg>其它</div><div class="sub"><ul class="kids">
     <li><svg class="ic"><use href="#pour"/></svg>后浇带(JD)</li><li><svg class="ic"><use href="#eave"/></svg>挑檐(T)</li><li><svg class="ic"><use href="#rail"/></svg>栏板(K)</li><li><svg class="ic"><use href="#cap"/></svg>压顶(YD)</li></ul></div></li>
    <li><div class="node"><svg class="ch o"><use href="#cd"/></svg><svg class="ic"><use href="#foldo"/></svg>自定义</div><div class="sub"><ul class="kids">
     <li><svg class="ic"><use href="#xpt"/></svg>自定义点</li><li><svg class="ic"><use href="#line4"/></svg>自定义线(X)<svg class="ic"><use href="#vid"/></svg><em>NEW</em></li><li><svg class="ic"><use href="#hatch"/></svg>自定义面</li><li><svg class="ic"><use href="#dimw"/></svg>尺寸标注(W)</li></ul></div></li>
    <li><div class="node"><svg class="ch o"><use href="#cd"/></svg><svg class="ic"><use href="#foldo"/></svg>CAD识别<svg class="ic v"><use href="#vid"/></svg><em>NEW</em></div><div class="sub none"><ul class="kids">
     <li><svg class="ic"><use href="#cad"/></svg>CAD草图</li><li><svg class="ic"><use href="#smart"/></svg>智能识别</li><li><svg class="ic"><use href="#iax"/></svg>识别轴网</li><li><svg class="ic"><use href="#cad"/></svg>识别柱大样</li><li><svg class="ic"><use href="#icol"/></svg>识别柱</li><li><svg class="ic"><use href="#iwall"/></svg>识别墙</li><li><svg class="ic"><use href="#idoor"/></svg>识别门窗洞</li><li><svg class="ic"><use href="#ibeam"/></svg>识别梁</li><li><svg class="ic"><use href="#islab"/></svg>识别板</li><li><svg class="ic"><use href="#ibar"/></svg>识别受力筋</li><li><svg class="ic"><use href="#ineg"/></svg>识别负筋</li><li><svg class="ic"><use href="#ibar2"/></svg>识别独立基础</li><li><svg class="ic"><use href="#ipc"/></svg>识别桩承台</li><li><svg class="ic"><use href="#ipl"/></svg>识别桩</li></ul></div></li>
   </ul>
   <div class="vs"><svg><use href="#cu"/></svg><i class="gap"></i><i class="thumb"></i><svg><use href="#cd"/></svg></div>
  </div>
  <button class="big">单构件输入</button><button class="big">报表预览</button>
</aside>

<aside class="mid">
  <section class="comp">
   <div class="cap"><h2>构件列表</h2><button class="raised" aria-label="固定"><svg><use href="#pin"/></svg></button><button aria-label="关闭"><svg><use href="#cls"/></svg></button></div>
   <div class="grp ctools"><button class="tb"><svg class="ic"><use href="#newc"/></svg>新建<i class="ar t"></i></button><button class="tb" aria-label="删除"><svg class="ic"><use href="#del"/></svg></button><button class="tb" aria-label="复制"><svg class="ic"><use href="#docs"/></svg></button></div>
   <div class="search"><input type="text" placeholder="搜索构件..." aria-label="搜索构件"><button aria-label="搜索"><svg class="ic"><use href="#find"/></svg></button></div>
   <div class="cbox"><ul>
    <li class="root"><svg class="half"><use href="#list0"/></svg>筏板主筋</li>
    <li><svg class="gr"><use href="#gear"/></svg><span>C12@150</span></li><li><svg class="gr"><use href="#gear"/></svg><span>C16@75</span></li><li><svg class="gr"><use href="#gear"/></svg><span>FBZJ-3</span></li><li><svg class="gr"><use href="#gear"/></svg><span>桩基</span></li><li><svg class="gr"><use href="#gear"/></svg><span>桩基2</span></li><li><svg class="gr"><use href="#gear"/></svg><span>桩基3</span></li><li><svg class="gr"><use href="#gear"/></svg><span>C14@150</span></li><li class="cur"><svg class="gr"><use href="#gear"/></svg><span>3-8、10-13栋底筋</span></li><li><svg class="gr"><use href="#gear"/></svg><span>3-8、10-13栋面筋</span></li><li><svg class="gr"><use href="#gear"/></svg><span>3-8、10-13栋附加筋E5</span></li><li><svg class="gr"><use href="#gear"/></svg><span>板面附加筋</span></li><li><svg class="gr"><use href="#gear"/></svg><span>c10-150</span></li><li><svg class="gr"><use href="#gear"/></svg><span>c14-150</span></li><li><svg class="gr"><use href="#gear"/></svg><span>c18-150</span></li></ul>
    <div class="hs"><svg><use href="#cl"/></svg><i class="thumb"></i><svg><use href="#cr"/></svg></div>
   </div>
  </section>
  <section class="dwg">
   <div class="cap"><h2>图纸管理</h2><button aria-label="固定"><svg><use href="#pin"/></svg></button><button aria-label="关闭"><svg><use href="#cls"/></svg></button></div>
   <div class="tabs"><button class="on">图纸文件列表</button><button class="cut">图纸</button><button class="st" aria-label="向左"><i class="la"></i></button><button class="st" aria-label="向右"><i class="ra"></i></button></div>
   <div class="dbody">
    <div class="dtools"><button>添加图纸</button><button class="dd" aria-label="更多添加"><i class="ar"></i></button><button>整理图纸</button><button class="mr">»</button></div>
    <div class="dgrid">
     <div class="dscroll"><div class="dclip"><table>
      <thead><tr><th></th><th>图纸名称</th></tr></thead>
      <tbody><tr><th>15</th><td>2018-04-13-地下</td></tr><tr><th>16</th><td>负二层柱_t3</td></tr><tr><th>17</th><td>1栋基础</td></tr><tr><th>18</th><td>2栋基础</td></tr><tr><th>19</th><td>负二层梁（非人</td></tr><tr><th>20</th><td>负二层板（非人</td></tr><tr><th>21</th><td>2018-05-02-地下</td></tr><tr><th>22</th><td>地下室底板实施</td></tr><tr><th>23</th><td>负二层柱_t3-1</td></tr><tr><th>24</th><td>负一层梁_t3</td></tr><tr><th>25</th><td>人防墙体平面图</td></tr><tr class="cur"><th>26</th><td>地下室底板实施</td></tr><tr><th>27</th><td>负一层梁人防</td></tr><tr><th>28</th><td>人防剪力墙大样</td></tr></tbody></table></div>
      <div class="vs"><svg><use href="#cu"/></svg><i class="gap"></i><i class="thumb"></i><svg><use href="#cd"/></svg></div></div>
     <div class="hs"><svg><use href="#cl"/></svg><i class="thumb"></i><svg><use href="#cr"/></svg></div>
    </div>
   </div>
  </section>
  <section class="cad">
   <div class="cap"><h2>CAD图层显示</h2><button aria-label="固定"><svg><use href="#pin"/></svg></button><button aria-label="关闭"><svg><use href="#cls"/></svg></button></div>
   <div class="layers"><label><svg class="ch"><use href="#cr"/></svg><input type="checkbox">已提取的CAD图层</label><label><svg class="ch"><use href="#cr"/></svg><input type="checkbox" checked>CAD原始图层</label></div>
  </section>
</aside>

<main class="center">
  <div class="bar edit"><div class="grp"><i class="grip"></i><button class="tb"><svg class="ic"><use href="#brush"/></svg>删除</button><i class="sep"></i><button class="tb"><svg class="ic"><use href="#copy"/></svg>复制</button><button class="tb"><svg class="ic"><use href="#mirror"/></svg>镜像</button><i class="sep"></i><button class="tb"><svg class="ic"><use href="#move"/></svg>移动</button><button class="tb"><svg class="ic"><use href="#rotate"/></svg>旋转</button><i class="sep"></i><button class="tb off"><svg class="ic"><use href="#gext"/></svg>延伸</button><button class="tb off"><svg class="ic"><use href="#gtrim"/></svg>修剪</button><i class="sep"></i><button class="tb off"><svg class="ic"><use href="#gbrk"/></svg>打断</button><button class="tb off"><svg class="ic"><use href="#gmrg"/></svg>合并</button><button class="tb off"><svg class="ic"><use href="#gsplit"/></svg>分割</button><i class="sep"></i><button class="tb off"><svg class="ic"><use href="#galign"/></svg>对齐<i class="ar t"></i></button><button class="tb"><svg class="ic"><use href="#offset"/></svg>偏移</button><button class="tb"><svg class="ic"><use href="#stretch"/></svg>拉伸</button><i class="sep"></i><button class="tb"><svg class="ic"><use href="#pen"/></svg>设置夹点</button></div></div>
  <div class="bar"><div class="grp first"><i class="grip"></i><label class="sel s1"><select aria-label="楼层"><option>基础层</option></select></label><label class="sel s2"><select aria-label="构件类别"><option>基础</option></select></label><label class="sel s3"><select aria-label="构件类型"><option>筏板主筋</option></select></label><label class="sel s3"><select aria-label="构件"><option>3-8、10-</option></select></label><i class="sep"></i><button class="tb on"><svg class="ic"><use href="#prop"/></svg>属性</button><button class="tb"><svg class="ic"><use href="#ebar"/></svg>编辑钢筋</button><button class="tb on"><svg class="ic"><use href="#clist"/></svg>构件列表</button><button class="tb"><svg class="ic"><use href="#picker"/></svg>拾取构件</button></div>
   <div class="grp"><i class="grip"></i><button class="tb"><svg class="ic"><use href="#twopt"/></svg>两点</button><button class="tb"><svg class="ic"><use href="#par"/></svg>平行</button><button class="tb"><svg class="ic"><use href="#ptang"/></svg>点角<i class="ar"></i></button><button class="tb"><svg class="ic"><use href="#arcax"/></svg>三点辅轴<i class="ar"></i></button><button class="tb"><svg class="ic"><use href="#brush"/></svg>删除辅轴</button><button class="tb"><svg class="ic"><use href="#dim"/></svg>尺寸标注<i class="ar"></i></button></div></div>
  <div class="bar"><div class="grp draw"><i class="grip"></i><button class="tb on"><svg class="ic"><use href="#cursor"/></svg>选择</button><button class="tb drop" aria-label="选择方式"><i class="ar t"></i></button><i class="sep"></i><button class="tb off"><svg class="ic"><use href="#gline"/></svg>直线</button><button class="tb off"><svg class="ic"><use href="#garc"/></svg>三点画弧<i class="ar"></i></button><label class="sel s4"><select aria-label="半径"><option></option></select></label><button class="tb off"><svg class="ic"><use href="#grect"/></svg>矩形</button><i class="sep"></i><button class="tb"><svg class="ic"><use href="#slab1"/></svg>单板</button><button class="tb"><svg class="ic"><use href="#slab4"/></svg>多板</button><button class="tb"><svg class="ic"><use href="#poly"/></svg>自定义<i class="ar t"></i></button><button class="tb"><svg class="ic"><use href="#horiz"/></svg>水平</button><button class="tb"><svg class="ic"><use href="#vert"/></svg>垂直</button><button class="tb"><svg class="ic"><use href="#xy"/></svg>XY方向</button><button class="tb"><svg class="ic"><use href="#pedge"/></svg>平行边布置受力筋<i class="ar"></i></button><button class="tb">放射筋<i class="ar t"></i></button><button class="tb"><svg class="ic"><use href="#abar"/></svg>自动配筋</button><i class="sep"></i><button class="tb"><svg class="ic"><use href="#swap"/></svg>交换左右标注</button><button class="tb"><svg class="ic"><use href="#vbar"/></svg>查看布筋<i class="ar t"></i></button><button class="tb"><svg class="ic"><use href="#cbar"/></svg>复制钢筋</button><button class="more" aria-label="更多">»</button></div><div class="grp stub"><i class="grip"></i></div></div>

  <div class="canvas">
   <svg class="plan" viewBox="339 168 1298 819" preserveAspectRatio="xMinYMin slice">
    <defs>
     <g id="pt"><path d="M-5 0L-2-4H2L5 0L2 4H-2z" fill="none" stroke="#f0f"/><path d="M-8 0H8M0-8V8" stroke="#fff"/></g>
     <path id="bub" d="M-12.500 0L-10-8-4-12H4L10-8 12.500 0 10 8 4 12H-4L-10 8z" fill="none" stroke="#008000"/>
    </defs>
    <rect x="339" y="168" width="1298" height="786" fill="#007c7c"/><rect x="339" y="954" width="1298" height="40" fill="#b8b8b8"/>
    <g fill="none" stroke="#fff"><path d="M434.500 618.500V469.500H600M434.500 618.500H600M544.500 953V836.500H693.500V953M823.500 953V836.500H973.500V953M1138.500 953V836.500H1319.500V953M1575.500 953V836.500H1637M1637 277.500H1575.500V383.500H1637M1637 468.500H1575.500V618.500H1637"/></g>
    <g fill="none" stroke="#ff0" stroke-width="2"><path d="M480 470H485V618M434 563V568H600M590 837H594V953M544 910V915H693V910M869 837H874V953M824 910V915H973V910M1194 837H1199V953M1138 910V915H1319V910M1632 837H1636V953M1574 910V915H1636M1631 277H1636V384H1631M1575 343V348H1636M1631 469H1636V618H1631M1574 563V568H1636M339 639H1637"/></g>
    <path d="M339 325H1637M1499 168V953" stroke="#f0f" stroke-width="2"/>
    <path d="M884 168V953" stroke="#0080ff" stroke-width="2"/>
    <path d="M498.500 168V987M738.500 168V987M941.500 168V987M1164.500 168V987M1372.500 168V987M1591.500 168V987M664.500 912V987M1015.500 912V987M339 314.500H1637M339 559.500H1637M339 586.500H1637M339 604.500H1637M339 911.500H1637" stroke="#f00000"/>
    <path d="M1367 912V987" stroke="#f00" stroke-width="2"/>
    <path d="M339.500 266V297M339.500 533V565M339.500 884V915" stroke="#f0f"/>
    <g fill="#848484"><path d="M493 538H510V522H526V565H493z"/><path d="M597 900H641V916H597z"/><path d="M866 889H882V873H899V900H910V916H866z"/><path d="M1196 889H1212V873H1229V900H1240V916H1196z"/></g>
    <path d="M493.500 565V538H509.500V522M597 916.500H641.500V900M899 873.500H882.500V889.500H866.500V916.500H910.500V900M1229 873.500H1212.500V889.500H1196.500V916.500H1240" fill="none" stroke="#f0f"/>
    <path d="M339 953.500H1637" stroke="#fff" stroke-width="5" stroke-dasharray="7 9"/><path d="M339 953H1637" stroke="#ff0"/><path d="M339 954H1637" stroke="#f0f"/>
    <path d="M1192 168V860" stroke="#f88080" stroke-width="2"/><path d="M1116 783L1192 860 1267 784" fill="none" stroke="#f88080"/>
    <path d="M1188 950H1196V957H1188z" fill="#223"/><path d="M1188 953.500H1196" stroke="#0f0"/>
    <use href="#pt" x="402.500" y="250.500"/><use href="#pt" x="520.500" y="250.500"/><use href="#pt" x="402.500" y="367.500"/><use href="#pt" x="520.500" y="367.500"/><use href="#pt" x="402.500" y="474.500"/><use href="#pt" x="520.500" y="474.500"/><use href="#pt" x="402.500" y="703.500"/><use href="#pt" x="520.500" y="703.500"/>
    <use href="#pt" x="402.500" y="804.500"/><use href="#pt" x="520.500" y="804.500"/><use href="#pt" x="637.500" y="804.500"/><use href="#pt" x="754.500" y="804.500"/><use href="#pt" x="989.500" y="804.500"/><use href="#pt" x="1106.500" y="804.500"/><use href="#pt" x="1340.500" y="804.500"/><use href="#pt" x="1458.500" y="804.500"/><use href="#pt" x="1575.500" y="804.500"/>
    <use href="#pt" x="1458.500" y="250.500"/><use href="#pt" x="1575.500" y="250.500"/><use href="#pt" x="1458.500" y="367.500"/><use href="#pt" x="1575.500" y="367.500"/><use href="#pt" x="1458.500" y="474.500"/><use href="#pt" x="1575.500" y="474.500"/><use href="#pt" x="1458.500" y="602.500"/><use href="#pt" x="1575.500" y="602.500"/><use href="#pt" x="1458.500" y="703.500"/><use href="#pt" x="1575.500" y="703.500"/>
    <use href="#bub" x="498" y="181"/><use href="#bub" x="941" y="181"/><use href="#bub" x="1372" y="181"/><use href="#bub" x="352" y="314"/><use href="#bub" x="352" y="559"/><use href="#bub" x="352" y="911"/><use href="#bub" x="1624" y="314"/><use href="#bub" x="1624" y="586"/><use href="#bub" x="1624" y="604"/><use href="#bub" x="738" y="974"/><use href="#bub" x="1164" y="974"/><use href="#bub" x="1591" y="974"/>
    <g class="axt"><text x="499" y="186">3</text><text x="941" y="186">5</text><text x="1373" y="186">7</text><text x="352" y="319">X</text><text x="352" y="564">V</text><text x="352" y="916">T</text><text x="1624" y="319">X</text><text x="1624" y="591">W</text><text x="1624" y="609">U</text></g>
    <g class="axt g"><text x="738" y="979">4</text><text x="1164" y="979">6</text><text x="1591" y="979">8</text></g>
    <path d="M392 937V900H390L394 888 398 900H396V937z" fill="#0f0"/><path d="M394 935V939H431V942L443 937 431 932V935z" fill="#f00"/>
    <path d="M403 891L408 896 413 891M408 896V900" fill="none" stroke="#0f0"/><path d="M431 917L440 925M440 917L431 925" stroke="#f00"/>
   </svg>

   <section class="dialog" role="dialog" aria-label="节点设置">
    <div class="dt"><svg class="ic"><use href="#logo"/></svg><h2>节点设置</h2><button aria-label="最小化"><svg viewBox="0 0 12 12"><path d="M1 6.500h10"/></svg></button><button aria-label="最大化"><svg viewBox="0 0 12 12"><path d="M1.500 1.500h9v9h-9z"/></svg></button><button aria-label="关闭"><svg viewBox="0 0 12 12"><path d="M1 1l10 10M11 1L1 11"/></svg></button></div>
    <div class="dmain">
     <div class="dtab"><table>
      <thead><tr><th></th><th>名称</th><th>节点图</th></tr></thead>
      <tbody>
      <tr><th>1</th><td>筏形基础端部外伸上部钢筋构造</td><td>节点1</td></tr>
      <tr><th>2</th><td>筏形基础端部外伸下部钢筋构造</td><td>节点1</td></tr>
      <tr><th>3</th><td>筏形基础端部中间层钢筋构造</td><td>节点1</td></tr>
      <tr><th>4</th><td>筏形基础端部无外伸上部钢筋遇梁构造</td><td>节点1</td></tr>
      <tr><th>5</th><td>筏形基础端部无外伸下部钢筋遇梁构造</td><td>节点1</td></tr>
      <tr><th>6</th><td>筏形基础端部无外伸上部钢筋遇墙构造</td><td>节点1</td></tr>
      <tr><th>7</th><td>筏形基础端部无外伸下部钢筋遇墙构造</td><td>节点1</td></tr>
      <tr><th>8</th><td>平板式筏形基础顶部高差节点</td><td>节点1</td></tr>
      <tr><th>9</th><td>梁板式筏形基础顶部高差节点</td><td>节点1</td></tr>
      <tr><th>10</th><td>筏形基础底部高差节点</td><td>节点1</td></tr>
      <tr class="cur"><th>11</th><td>筏形基础钢筋锚入相邻筏板构造</td><td>节点1</td></tr>
      <tr><th>12</th><td>筏形基础钢筋遇承台/独基/承台梁/基础联系梁/</td><td>节点2</td></tr>
      <tr><th>13</th><td>筏形/承台基础遇集水坑节点</td><td>节点1</td></tr>
      <tr><th>14</th><td>筏形基础钢筋遇柱墩构造</td><td>节点1</td></tr>
      <tr><th>15</th><td>筏形基础斜交阳角构造</td><td>节点1</td></tr>
      <tr><th>16</th><td>筏形基础斜交阴角构造</td><td>节点1</td></tr>
      <tr class="dim"><th>17</th><td>筏板马凳筋配置方式</td><td>矩形布置</td></tr>
      <tr class="dim"><th>18</th><td>筏板拉筋配置方式</td><td>梅花布置</td></tr>
      <tr><th>19</th><td>承台底筋锚入防水底板构造</td><td>节点1</td></tr>
      </tbody></table></div>
     <div class="pv"><h3>节点设置示意图</h3>
      <div class="fig"><svg viewBox="0 0 290 367">
       <g fill="none" stroke="#fff"><path d="M26.500 116V129M26.500 134V152M26.500 170V175M26.500 182V200M26.500 207V224"/><path d="M18 162L26 152V162M18 162H34L27 170V162M256 162L264 152V162M256 162H271L264 170V162"/><path d="M26.500 128.500H144M32 195.500H144M26.500 206.500H144" stroke-dasharray="18 6"/><path d="M144.500 206.500V128.500H263.500M144 195.500H263M144 206.500H263M263.500 116V222"/><path d="M106.500 112V125M144.500 112V125M106 119.500H144M102 124L111 114M140 124L149 114M106.500 207V220M144.500 207V220M106 213.500H144M102 218L111 209M140 218L149 209"/><path d="M95.500 137V156M95.500 165V186M88 136.500H101M88 156.500H101M88 165.500H101M88 186.500H101M90 132L101 141M90 152L101 161M90 161L101 170M90 182L101 191"/></g>
       <path d="M107 156V136H263M107 165V187H263" fill="none" stroke="#f00" stroke-width="2"/>
       <text x="117" y="112" class="gt">la</text><text x="117" y="232" class="gt">la</text><text transform="translate(84 191) rotate(-90)" class="gt b">500</text><text transform="translate(84 151) rotate(-90)" class="gt b">0</text>
       <text x="113" y="263" class="ct">节点一</text><path d="M107 269H193" stroke="#0ff" stroke-width="2"/>
       <path d="M105 182L131 184 128 189 304 306 122 199 119 203z" fill="#ff3c3c"/>
      </svg></div>
      <div class="hint"><span>提示信息:</span><p>传统算法: 面筋、底筋伸入相邻筏板内水<br>平段长度默认为La，弯折段长度默认为0。</p></div>
     </div>
    </div>
    <div class="df"><button class="ok">确定</button><button>取消</button></div>
   </section>
  </div>

  <div class="bar snap"><div class="grp"><i class="grip"></i><button class="tb"><svg class="ic"><use href="#ortho"/></svg>正交</button><button class="tb on"><svg class="ic"><use href="#osnap"/></svg>对象捕捉</button><button class="tb on"><svg class="ic"><use href="#dyn"/></svg>动态输入</button></div><div class="grp"><i class="grip"></i><button class="tb"><svg class="ic"><use href="#xpt"/></svg>交点</button><button class="tb on"><svg class="ic"><use href="#perp"/></svg>垂点</button><button class="tb on"><svg class="ic"><use href="#mid"/></svg>中点</button><button class="tb on"><svg class="ic"><use href="#vtx"/></svg>顶点</button><button class="tb"><svg class="ic"><use href="#coord"/></svg>坐标</button></div>
   <div class="grp offs"><i class="grip"></i><label class="sel s1"><select aria-label="偏移方式"><option>不偏移</option></select></label><i class="sep"></i><label class="num">X=<span><input type="text" value="0"><i class="sp"></i></span>mm</label><label class="num">Y=<span><input type="text" value="0"><i class="sp"></i></span>mm</label><i class="sep"></i><label class="rot"><input type="checkbox">旋转</label><label class="num w"><span><input type="text" value="0.000" aria-label="旋转角度"><i class="sp"></i></span>°</label></div></div>
</main>

<aside class="props">
  <div class="cap blue"><h2>属性编辑器</h2><button aria-label="固定"><svg><use href="#pin"/></svg></button><button aria-label="关闭"><svg><use href="#cls"/></svg></button></div>
  <div class="pbox"><table>
   <thead><tr><th></th><th>属性名称</th><th>属性值</th></tr></thead>
   <tbody>
   <tr class="key"><th>1</th><td>名称</td><td>3-8、10-13栋底</td></tr>
   <tr><th>2</th><td>类别</td><td>底筋</td></tr>
   <tr class="key"><th>3</th><td>钢筋信息</td><td>⏀16@150</td></tr>
   <tr><th>4</th><td>钢筋锚固</td><td>(37)</td></tr>
   <tr><th>5</th><td>钢筋搭接</td><td>(52)</td></tr>
   <tr><th>6</th><td>归类名称</td><td>FB-700[25502]</td></tr>
   <tr><th>7</th><td>汇总信息</td><td>筏板主筋</td></tr>
   <tr><th>8</th><td>计算设置</td><td>按默认计算设置</td></tr>
   <tr class="cur"><th>9</th><td>节点设置</td><td>按默认节点设置</td></tr>
   <tr><th>10</th><td>搭接设置</td><td>按默认搭接设置</td></tr>
   <tr><th>11</th><td>长度调整(mm)</td><td></td></tr>
   <tr><th>12</th><td>备注</td><td></td></tr>
   <tr class="grpr"><th>13</th><td><div><button aria-label="折叠">−</button>显示样式</div></td><td></td></tr>
   <tr class="ch1"><th>14</th><td><div><i></i>边框颜色</div></td><td><span class="sw"></span></td></tr>
   <tr class="ch1"><th>15</th><td><div><i></i>填充颜色</div></td><td><span class="sw"></span></td></tr>
   <tr class="ch1 last"><th>16</th><td><div><i></i>不透明度</div></td><td>100</td></tr>
   </tbody></table></div>
</aside>
</div>

<footer class="status"><span class="a">X=49666 Y=94398</span><span class="b">层高:0.4m</span><span class="c">底标高:-10.8m</span><span class="d">1(20)</span><span class="e">在此设置筏板主筋的节点构造类型</span><span class="f">157.3 FPS</span></footer>
<div class="task"><i></i><span class="pc">97%</span><span>16:04</span></div>

<div class="notch"></div>
<div class="glow"></div>
<div class="ball">62</div>
<svg class="meter" viewBox="0 0 10 60"><rect width="14" height="60" rx="2" fill="#3c4048"/><rect x="3" y="5" width="4" height="50" fill="#1c2028"/><path d="M5 36V55" stroke="#4ab8e8" stroke-width="2" stroke-dasharray="1 1"/></svg>
<div class="ime"><svg viewBox="0 0 28 26"><path d="M1 5L22 0 27 20 24 24 5 26z" fill="#f0561e"/><path d="M20 7q-11-3-12 1t8 4 2 7-12 0" fill="none" stroke="#fff" stroke-width="3.500"/></svg><b>中</b></div>
</body>
</html>
```
FILE: styles.css
```css
* { box-sizing: border-box; }
html, body { height: 100%; }
body {
  margin: 0; display: flex; flex-direction: column; overflow: hidden; position: relative;
  background: #f0f0f0; color: #000;
  font: 12px/16px "Open Sans", "Noto Sans CJK SC", sans-serif;
}
h1, h2, h3, p, ul { margin: 0; padding: 0; font-size: inherit; font-weight: normal; }
ul { list-style: none; }
button, input, select { font: inherit; color: inherit; margin: 0; padding: 0; border: 0; background: none; }
button { white-space: nowrap; }
svg { display: block; flex: none; }
.defs { position: absolute; width: 0; height: 0; }
.ic { width: 16px; height: 16px; }

/* title and menu */
.titlebar { height: 23px; background: #fff; display: flex; align-items: center; gap: 5px; padding: 0 19px 0 2px; color: #8c8c8c; flex: none; }
.titlebar h1 { flex: 1; }
.winbtns { display: flex; gap: 34px; }
.winbtns svg, .dt button svg { width: 12px; height: 12px; fill: none; stroke: #777; }
.menubar { height: 30px; display: flex; align-items: center; gap: 11px; padding-left: 7px; flex: none; }
.menubar u { text-underline-offset: 2px; }
.tip { margin-left: auto; width: 187px; height: 26px; line-height: 26px; text-align: center; color: #603000; text-decoration: none; background: linear-gradient(90deg, #fbfbfb, #f1f1f1); white-space: nowrap; }
.menubar .acct { width: 268px; height: 26px; margin: 0 5px 0 -9px; align-self: center; }
.acct > span { margin: 0 4px 0 2px; white-space: nowrap; }

/* toolbars */
.bar { height: 29px; display: flex; align-items: center; gap: 4px; flex: none; }
.bar.top { height: 31px; padding: 0 0 1px 1px; }
.bar.edit { height: 26px; }
.grp { display: flex; align-items: center; align-self: stretch; background: linear-gradient(#fdfdfd, #f1f1f1); border-radius: 2px; padding-right: 3px; }
.grp.flat { background: none; margin-left: -2px; }
.grp.file { width: 157px; padding: 0; }
.tb { display: flex; align-items: center; gap: 4px; height: 24px; padding: 0 3px; border: 1px solid transparent; margin-right: -1px; flex: none; }
.tb.on { background: #dce9f5; border-color: #0078d7; position: relative; }
.tb.off { color: #8c8c8c; }
.tb.white { background: #fff; }
.tb.drop { padding: 0 1px; }
.ar { width: 0; height: 0; border: 3px solid transparent; border-top: 3px solid currentColor; border-bottom: 0; margin: 0 1px 0 3px; flex: none; }
.ar.t { margin: 0 0 0 -1px; }
.sum { width: 16px; text-align: center; font: bold 15px/16px "Liberation Serif", serif; }
.sep { width: 1px; height: 20px; background: #bdbdbd; margin: 0 0 0 4px; flex: none; }
.grip { width: 2px; height: 16px; margin: 0 2px 0 4px; background: repeating-linear-gradient(#b4b4b4 0 2px, transparent 2px 4px); flex: none; }
.first { width: 567px; margin-right: 70px; }
.draw { flex: 1; }
.stub { width: 32px; }
.more { margin: -12px 3px 0 auto; font-size: 16px; font-weight: bold; }
.sel { position: relative; display: flex; height: 22px; margin-right: 3px; background: #fff; flex: none; }
.sel select { appearance: none; width: 100%; height: 100%; padding: 0 15px 0 2px; overflow: hidden; }
.sel::after { content: ""; position: absolute; right: 4px; top: 9px; border: 3px solid transparent; border-top-color: #000; border-bottom: 0; pointer-events: none; }
.sel::before { content: ""; position: absolute; right: 0; top: 1px; bottom: 1px; width: 14px; background: #f3f3f3; pointer-events: none; }
.s1 { width: 57px; } .s2 { width: 70px; } .s3 { width: 69px; }
.s4 { width: 57px; border: 1px solid #8a8a8a; background: #f4f4f4; margin: 0 1px 0 0; }

/* work area */
.work { flex: 1; min-height: 0; display: grid; grid-template-columns: 180px 153px minmax(0, 1fr) 280px; column-gap: 3px; }
.nav, .mid, .cap, .status, .dialog, .props { font-family: "Liberation Serif", "Noto Sans CJK SC", sans-serif; }
.nav, .mid, .center, .props { display: flex; flex-direction: column; min-height: 0; min-width: 0; }
.cap { height: 15px; display: flex; align-items: center; border: 1px solid #999; background: #f0f0f0; font-size: 13px; line-height: 13px; flex: none; }
.cap h2 { flex: 1; white-space: nowrap; }
.cap button { width: 16px; height: 13px; display: flex; align-items: center; justify-content: center; }
.cap svg { width: 10px; height: 10px; }
.cap .raised { border: 1px solid #555; border-top-color: #fff; border-left-color: #fff; }
.cap.blue { background: #0054e3; border-color: #0054e3; color: #fff; }
.big { height: 22px; border: 1px solid #a0a0a0; border-top-color: #d0d0d0; background: #f0f0f0; flex: none; }
.nav .cap { margin-bottom: 2px; }
.exp { height: 28px; display: flex; gap: 8px; padding: 5px 6px; background: linear-gradient(#fdfdfd, #f1f1f1); border: 1px solid #c8c8c8; flex: none; }
.treebox { flex: 1; min-height: 0; display: flex; margin: 0 1px 2px 2px; border: 1px solid #828790; background: #fff; overflow: hidden; padding: 0 1px 1px 0; }
.tree { flex: 1; min-width: 0; overflow: hidden; }
.tree .kids li, .node { height: 16px; display: flex; align-items: center; gap: 5px; white-space: nowrap; }
.sub { margin-left: 11px; border-left: 1px dotted #888; }
.sub.none { border-color: transparent; }
.kids { margin-left: 18px; border-left: 1px dotted #888; }
.kids li::before { content: ""; width: 9px; border-top: 1px dotted #888; margin-right: -4px; flex: none; }
.kids .cur span { background: #d9d9d9; padding-right: 5px; margin-left: -5px; padding-left: 5px; }
.kids .ic + .ic, .tree em { margin-left: -4px; }
.node { padding-left: 7px; }
.node .ch { margin-right: 2px; color: #999; }
.ch { width: 8px; height: 8px; }
.node .ch.o { color: #444; }
.tree .v { margin-left: 2px; }
.tree em { font: bold 8px/9px "Open Sans", sans-serif; background: #ffe600; align-self: flex-start; }
.vs { width: 16px; background: #f0f0f0; display: flex; flex-direction: column; align-items: center; padding: 4px 0; flex: none; }
.vs svg, .hs svg { width: 8px; height: 8px; color: #505050; }
.vs .thumb { width: 15px; flex: 1; background: #cdcdcd; margin: 0 0 7px; }
.nav .vs .gap { height: 34px; }

.comp { height: 441px; display: flex; flex-direction: column; }
.ctools { height: 27px; align-self: auto; margin-top: 1px; font-family: "Open Sans", "Noto Sans CJK SC", sans-serif; gap: 2px; }
.search { display: flex; align-items: center; gap: 4px; margin: 1px 0; height: 24px; }
.search input { width: 127px; height: 24px; border: 1px solid #7a7a7a; background: #fff; padding: 0 2px; }
.search input::placeholder { color: #777; }
.cbox { flex: 1; border: 1px solid #828790; background: #fff; display: flex; flex-direction: column; overflow: hidden; padding: 1px; }
.cbox ul { flex: 1; }
.cbox li { height: 16px; display: flex; align-items: center; white-space: nowrap; }
.cbox li:not(.root)::before { content: ""; width: 10px; border-top: 1px dotted #888; flex: none; }
.half { width: 10px; height: 16px; margin-right: 3px; }
.gr { width: 12px; height: 12px; margin: 0 1px 0 2px; }
.cbox li span { padding: 0 4px 0 7px; }
.cbox .cur span, .cbox .cur .gr { background: #316ac5; }
.hs { height: 16px; background: #f0f0f0; display: flex; align-items: center; padding: 0 4px; gap: 6px; flex: none; }
.hs .thumb { width: 92px; height: 15px; margin: 0 auto 0 19px; background: #cdcdcd; }

.dwg { flex: 1; min-height: 0; margin-top: 7px; display: flex; flex-direction: column; }
.tabs { height: 19px; display: flex; align-items: flex-end; margin-top: 1px; flex: none; }
.tabs .on { width: 88px; height: 19px; background: #fff; border: 1px solid #d9d9d9; border-bottom: 0; flex: none; line-height: 16px; }
.tabs .cut { flex: 1; min-width: 0; text-align: left; padding-left: 3px; height: 18px; }
.tabs .st { width: 16px; height: 18px; border: 1px solid #bbb; display: grid; place-items: center; flex: none; }
.la, .ra { border: 3px solid transparent; border-right-color: #000; border-left: 0; }
.ra { border-left: 3px solid #000; border-right: 0; }
.dbody { flex: 1; min-height: 0; border: 2px solid #e2e2e2; margin-right: 1px; padding: 3px 0 1px 3px; display: flex; flex-direction: column; }
.dtools { display: flex; height: 23px; flex: none; font-family: "Open Sans", "Noto Sans CJK SC", sans-serif; }
.dtools button { border: 1px solid #a8a8a8; width: 58px; flex: none; }
.dtools .dd { width: 12px; display: grid; place-items: center; }
.dtools .dd .ar { margin: 0; }
.dtools .mr { width: 12px; margin-left: 2px; font-weight: bold; line-height: 12px; padding-bottom: 8px; }
.dgrid { flex: 1; min-height: 0; margin: 3px 2px 0 0; border: 1px solid #a0a0a0; background: #fff; display: flex; flex-direction: column; padding: 0 1px 1px; }
.dscroll { flex: 1; min-height: 0; display: flex; }
.dclip { flex: 1; min-width: 0; overflow: hidden; }
.dgrid table { width: 300px; }
.dgrid .vs .gap { height: 147px; }
.dgrid .vs { background: #fff; padding: 5px 0; }
.dgrid .hs .thumb { width: 17px; margin-left: 2px; }
.dgrid .hs { width: 124px; }

table { border-spacing: 0; table-layout: fixed; }
td, th { height: 19px; padding: 0; border: 0 solid #c0c0c0; border-width: 0 1px 1px 0; font-weight: normal; white-space: nowrap; overflow: hidden; line-height: 16px; }
th:first-child { width: 21px; background: linear-gradient(90deg, #fff, #eee); }
thead th { background: linear-gradient(#fff, #f0f0f0); }
thead th:last-child { background: linear-gradient(#f8d79c, #f0bc5c); color: #600060; }
.cur > th:first-child { background: #ffd48a; color: #600060; }
.dgrid thead th { height: 25px; text-align: left; padding-left: 50px; }
.dgrid thead th:first-child { padding: 0; }
.dgrid td { padding-left: 20px; }
.dgrid .cur td { background: #007c1a; box-shadow: inset 0 0 0 2px #808080; }

.cad { height: 88px; margin-top: 7px; display: flex; flex-direction: column; flex: none; }
.layers { flex: 1; border: 1px solid #828790; background: #fff; padding: 3px 0 0 9px; }
.layers label { display: flex; align-items: center; gap: 2px; height: 14px; line-height: 14px; white-space: nowrap; }
.layers .ch { color: #999; margin-right: 6px; }
input[type=checkbox] { appearance: none; width: 13px; height: 13px; border: 1px solid #333; background: #fff; display: grid; place-items: center; flex: none; }
input[type=checkbox]:checked::after { content: ""; width: 8px; height: 4px; border: solid #333; border-width: 0 0 1px 1px; transform: rotate(-45deg); margin-top: -3px; }

/* drawing area */
.canvas { flex: 1; min-height: 0; position: relative; background: #007c7c; }
.plan { width: 100%; height: 100%; }
.axt { font: bold 15px "Liberation Mono", monospace; fill: #d88080; text-anchor: middle; }
.axt.g { fill: #707070; }
.snap { height: 31px; gap: 0; padding: 2px 0 1px; }
.offs { color: #777; }
.offs .sel { color: #000; height: 23px; }
.num { display: flex; align-items: center; gap: 3px; margin: 0 2px; white-space: nowrap; }
.num span { display: flex; width: 58px; height: 23px; border: 1px solid #7a7a7a; align-items: center; }
.num.w span { width: 68px; }
.num input { flex: 1; min-width: 0; text-align: right; }
.sp { width: 17px; height: 17px; background: linear-gradient(#777, #777) center 4px / 5px 1px no-repeat, linear-gradient(#777, #777) center 3px / 3px 1px no-repeat, linear-gradient(#777, #777) center 2px / 1px 1px no-repeat, linear-gradient(#777, #777) center 12px / 5px 1px no-repeat, linear-gradient(#777, #777) center 13px / 3px 1px no-repeat, linear-gradient(#777, #777) center 14px / 1px 1px no-repeat; }
.rot { display: flex; gap: 8px; align-items: center; margin: 0 2px 0 4px; color: #000; }
.rot input { border-color: #999; width: 11px; height: 11px; }

/* dialog */
.dialog { position: absolute; left: 190px; top: 21px; width: 863px; height: 572px; border: 1px solid #0078d7; background: #f0f0f0; display: flex; flex-direction: column; }
.dt { height: 30px; background: #fff; display: flex; align-items: center; gap: 5px; padding: 0 17px 0 8px; flex: none; }
.dt h2 { flex: 1; }
.dt button { margin-left: 28px; }
.dt button svg { stroke: #000; }
.dmain { flex: 1; min-height: 0; display: flex; margin: 4px 3px 0 2px; border: 1px solid #a0a0a0; background: #fff; padding: 1px; }
.dtab { flex: 1; min-width: 0; }
.dtab table { width: 100%; }
.dtab th:nth-child(2) { width: 261px; }
.dtab td { padding-left: 2px; }
.dtab td:nth-child(2) { background: #ffffe1; }
.dtab .dim td { color: #808080; }
.dtab .cur td:last-child { background: #d9e8f6; color: #00f; outline: 1px dotted #000; outline-offset: -1px; }
.pv { width: 310px; border: 1px solid #444; background: linear-gradient(#b8c8da, #d8e4f1 40px); padding: 9px 7px 7px; display: flex; flex-direction: column; }
.pv h3 { color: #999; line-height: 20px; }
.fig { background: #000; border: 1px solid #fff; height: 369px; margin-top: 1px; position: relative; z-index: 1; flex: none; }
.fig svg { width: 290px; height: 367px; overflow: visible; }
.gt { font: 20px "Liberation Serif", serif; fill: #0f0; }
.gt.b { font-size: 21px; }
.ct { font: 24px "Noto Sans CJK SC", sans-serif; font-weight: 300; fill: #0ff; }
.hint { flex: 1; border: 1px solid #a8a8a8; background: #f0f0f0; display: flex; gap: 12px; padding: 14px 0 0; line-height: 12px; margin-top: 1px; }
.hint span { width: 53px; flex: none; }
.hint span, .hint p { white-space: nowrap; }
.df { height: 43px; display: flex; gap: 15px; justify-content: flex-end; padding: 11px 15px 0 0; flex: none; }
.df button { width: 72px; height: 23px; background: #e1e1e1; border: 1px solid #adadad; }
.df .ok { border: 2px solid #0078d7; }

/* property editor */
.pbox { flex: 1; margin-top: 1px; border: 1px solid #a0a0a0; background: #fff; padding: 2px 3px 0 1px; }
.pbox table { width: 100%; }
.pbox th:last-child { width: 94px; }
.pbox thead th { height: 23px; }
.pbox td { padding-left: 20px; }
.pbox td:last-child { padding-left: 2px; }
.key td:nth-child(2) { color: #00f; }
.pbox .cur td:nth-child(2) { background: #0078d7; color: #fff; }
.pbox .cur td:last-child { background: #d9e8f6; }
.pbox td > div { display: flex; align-items: center; }
.grpr td:nth-child(2) { padding-left: 2px; color: #888; }
.grpr button { width: 13px; height: 13px; border: 1px solid #aaa; line-height: 10px; margin-right: 5px; color: #000; }
.ch1 td:nth-child(2) { padding-left: 8px; }
.ch1 div i { width: 17px; height: 18px; margin-right: 5px; border-left: 1px solid #c0c0c0; background: linear-gradient(#c0c0c0, #c0c0c0) 0 9px / 17px 1px no-repeat; }
.last div i { border: 0; background: linear-gradient(#c0c0c0, #c0c0c0) 0 9px / 17px 1px no-repeat, linear-gradient(#c0c0c0, #c0c0c0) 0 0 / 1px 9px no-repeat; }
.sw { display: block; height: 14px; margin: 0 4px 0 2px; border: 1px solid #000; background: #ff0; }

/* status and task bars */
.status { height: 22px; display: flex; gap: 2px; padding-top: 1px; background: #f0f0f0; flex: none; margin-top: 1px; }
.status span { border: 1px solid #d4d4d4; background: linear-gradient(#fff, #f2f2f2); padding: 2px 1px; white-space: nowrap; line-height: 16px; }
.a { width: 148px; } .b { width: 78px; } .c { width: 98px; } .d { width: 48px; } .e { flex: 1; } .f { width: 70px; }
.task { height: 8px; background: #0a2b4c; color: #fff; display: flex; overflow: hidden; padding: 4px 46px 0 790px; flex: none; }
.task i { width: 48px; height: 8px; background: #1e62a0; margin: -4px auto 0 0; }
.task .pc { margin-right: 245px; }

/* desktop widgets floating over the window */
.notch { position: absolute; left: 1265px; top: -8px; width: 288px; height: 8px; box-shadow: 0 1px 4px #777; }
.glow { position: absolute; right: -50px; top: 291px; width: 61px; height: 56px; border-radius: 50%; background: #ccf9f9; }
.ball { position: absolute; right: -22px; top: 482px; width: 42px; height: 42px; border-radius: 50%; border: 2px solid #fff; outline: 1px solid #aaa; background: radial-gradient(circle at 60% 20%, #b0eea8, #4fcb5a 50%); color: #fff; font-weight: bold; line-height: 38px; padding-left: 3px; box-shadow: -2px 4px 6px #0005; }
.meter { position: absolute; right: 0; top: 658px; width: 10px; height: 60px; }
.ime { position: absolute; left: 1480px; top: 1014px; display: flex; align-items: center; }
.ime svg { width: 28px; height: 26px; position: relative; }
.ime b { background: #fff; border: 1px solid #aaa; border-left: 0; width: 25px; height: 22px; text-align: center; line-height: 20px; font-size: 14px; color: #1a72d0; }
```
